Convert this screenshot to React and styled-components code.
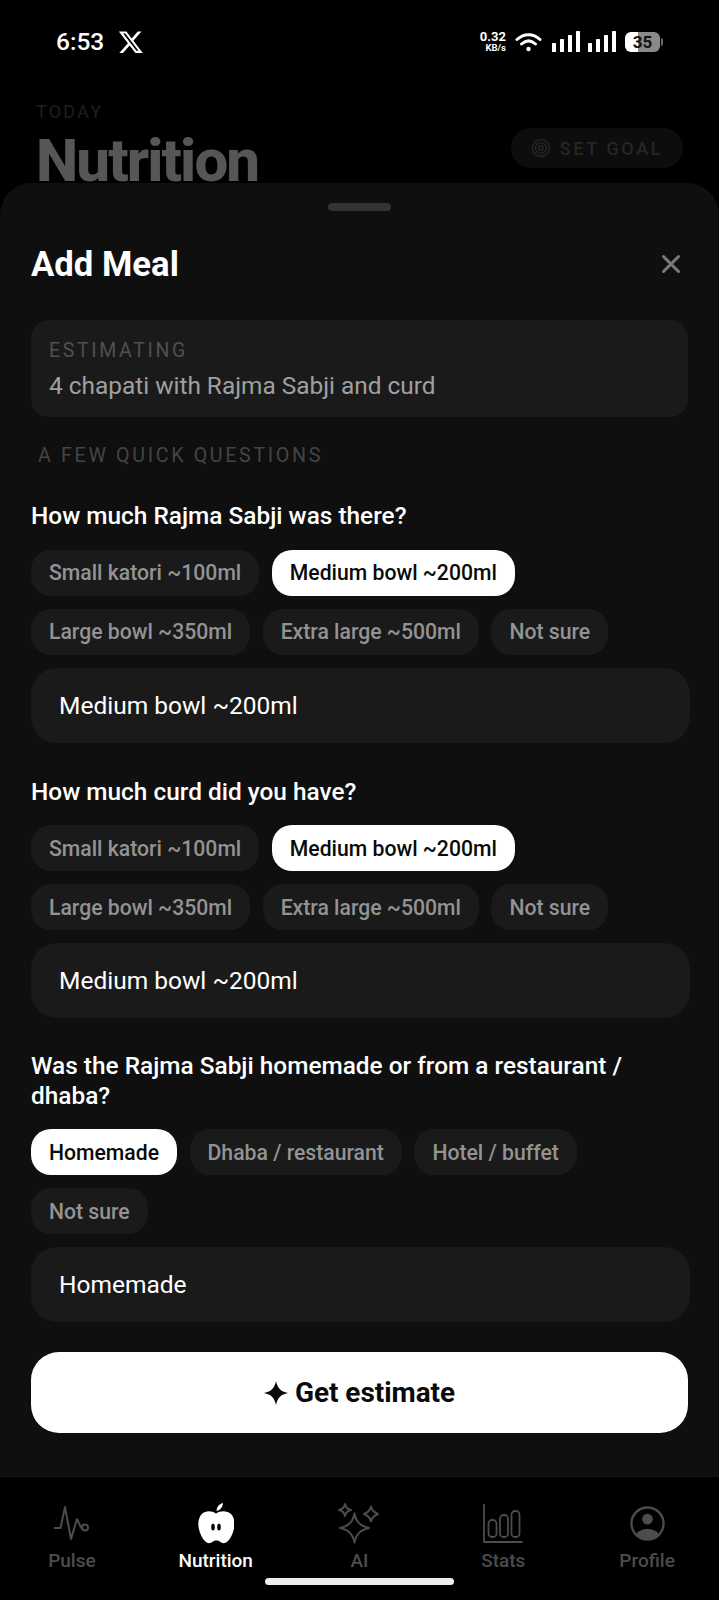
import React from "react";
import styled, { createGlobalStyle } from "styled-components";

const Global = createGlobalStyle`
  html, body { margin: 0; padding: 0; background: #000; }
  body { font-family: Roboto, "Liberation Sans", sans-serif; }
  * { box-sizing: border-box; }
`;

const Page = styled.div`
  width: 719px;
  height: 1600px;
  background: #000;
  position: relative;
  overflow: hidden;
  display: flex;
  flex-direction: column;
`;

const Backdrop = styled.div`
  height: 183px;
  flex: none;
  overflow: hidden;
`;

const StatusBar = styled.div`
  height: 83px;
  padding: 0 58px 0 56px;
  display: flex;
  align-items: center;
  justify-content: space-between;
  color: #fff;
`;

const StatusLeft = styled.div`
  display: flex;
  align-items: center;
  gap: 15px;
`;

const Clock = styled.span`
  font-size: 24.5px;
  font-weight: 500;
`;

const StatusRight = styled.div`
  display: flex;
  align-items: center;
`;

const Speed = styled.div`
  display: flex;
  flex-direction: column;
  align-items: flex-end;
  width: 30px;
  margin-right: 9px;
  font-weight: 700;
`;

const SpeedValue = styled.span`
  font-size: 13px;
  line-height: 13px;
`;

const SpeedUnit = styled.span`
  font-size: 9.5px;
  line-height: 10px;
`;

const SignalGap = styled.div`
  width: ${(p) => p.$w}px;
`;

const Battery = styled.div`
  position: relative;
  width: 35px;
  height: 20px;
  margin-left: 9px;
  margin-right: 1px;
  border-radius: 6px;
  background: linear-gradient(90deg, #fff 0 36%, #8a8a8a 36% 100%);
  color: #111;
  font-size: 17px;
  font-weight: 700;
  line-height: 20px;
  text-align: center;
  &::after {
    content: "";
    position: absolute;
    right: -3px;
    top: 6px;
    width: 2px;
    height: 8px;
    border-radius: 0 2px 2px 0;
    background: #666;
  }
`;

const Header = styled.div`
  padding: 19px 36px 0 36px;
  display: flex;
  justify-content: space-between;
  align-items: flex-start;
`;

const TodayLabel = styled.div`
  font-size: 18px;
  line-height: 20px;
  letter-spacing: 2.2px;
  color: #1f1f1f;
`;

const PageTitle = styled.div`
  margin-top: 4px;
  font-size: 60px;
  line-height: 70px;
  font-weight: 800;
  letter-spacing: -1.9px;
  color: #565656;
`;

const GoalButton = styled.div`
  margin-top: 26px;
  height: 40px;
  width: 172px;
  padding: 0 20px;
  border-radius: 20px;
  background: #0d0d0d;
  display: flex;
  align-items: center;
  gap: 9px;
  font-size: 18px;
  font-weight: 500;
  letter-spacing: 2.6px;
  color: #262626;
  white-space: nowrap;
`;

const Sheet = styled.div`
  height: 1293px;
  flex: none;
  background: #0f0f0f;
  border-radius: 32px 32px 0 0;
  padding: 20px 31px 0;
  display: flex;
  flex-direction: column;
`;

const Handle = styled.div`
  width: 63px;
  height: 8px;
  border-radius: 4px;
  background: #333;
  align-self: center;
`;

const TitleRow = styled.div`
  margin-top: 28px;
  height: 50px;
  display: flex;
  justify-content: space-between;
  align-items: center;
`;

const SheetTitle = styled.h2`
  margin: 0;
  font-size: 34.7px;
  font-weight: 700;
  color: #fff;
`;

const CloseButton = styled.button`
  all: unset;
  display: flex;
  margin-right: 7px;
`;

const EstimateCard = styled.div`
  margin-top: 31px;
  height: 97px;
  border-radius: 18px;
  background: #1a1a1a;
  padding: 19px 18px;
`;

const EstimateLabel = styled.div`
  font-size: 19.5px;
  line-height: 24px;
  letter-spacing: 2.65px;
  color: #505050;
`;

const EstimateText = styled.div`
  margin-top: 8px;
  font-size: 24.4px;
  line-height: 30px;
  color: #a0a0a0;
`;

const SectionLabel = styled.div`
  margin-top: 26px;
  padding-left: 7px;
  font-size: 19.7px;
  line-height: 26px;
  letter-spacing: 2.65px;
  color: #444;
`;

const Question = styled.section`
  margin-top: ${(p) => p.$gap}px;
  display: flex;
  flex-direction: column;
`;

const QuestionLabel = styled.div`
  font-size: 24.4px;
  line-height: 29.5px;
  font-weight: 500;
  color: #fff;
`;

const Chips = styled.div`
  margin-top: 19px;
  display: flex;
  flex-wrap: wrap;
  gap: 13px 12.5px;
`;

const Chip = styled.div`
  height: 46px;
  padding: 0 18px;
  border-radius: 20px;
  display: flex;
  align-items: center;
  font-size: 21.2px;
  font-weight: 500;
  background: ${(p) => (p.$on ? "#fff" : "#1a1a1a")};
  color: ${(p) => (p.$on ? "#0a0a0a" : "#939393")};
`;

const Answer = styled.div`
  margin-top: 13px;
  width: 659px;
  height: 75px;
  border-radius: 26px;
  background: #1a1a1a;
  padding: 0 28px;
  display: flex;
  align-items: center;
  font-size: 24.5px;
  color: #fff;
`;

const EstimateButton = styled.button`
  all: unset;
  margin-top: 30px;
  height: 81px;
  border-radius: 28px;
  background: #fff;
  display: flex;
  align-items: center;
  justify-content: center;
  gap: 7px;
  font-size: 27.9px;
  font-weight: 700;
  color: #0a0a0a;
`;

const TabBar = styled.nav`
  flex: 1;
  background: #000;
  border-top: 1px solid #161616;
  display: grid;
  grid-template-columns: repeat(5, 1fr);
  padding-top: 23px;
`;

const Tab = styled.div`
  display: flex;
  flex-direction: column;
  align-items: center;
  font-size: 19px;
  font-weight: 500;
  line-height: 22px;
  color: ${(p) => (p.$on ? "#fff" : "#4c4c4c")};
`;

const TabIcon = styled.div`
  height: 46px;
  display: flex;
  align-items: center;
  justify-content: center;
  margin-bottom: 4px;
`;

const HomeBar = styled.div`
  position: absolute;
  left: 265px;
  bottom: 15px;
  width: 189px;
  height: 7px;
  border-radius: 4px;
  background: #eee;
`;

const XLogo = () => (
  <svg width="25" height="24" viewBox="0 0 24 24" fill="#fff">
    <path d="M18.24 1.5h3.68l-8.04 9.19L23.34 23h-7.41l-5.8-7.58L3.49 23H-.19l8.6-9.83L-.66 1.5h7.6l5.24 6.93zM16.95 20.8h2.04L5.83 3.6H3.64z" />
  </svg>
);

const Wifi = () => (
  <svg width="27" height="20" viewBox="0 0 27 20" fill="none" stroke="#fff" strokeWidth="3" strokeLinecap="round">
    <path d="M2 7.5C9 1 18 1 25 7.5" />
    <path d="M6.5 12c4.5-4 9.5-4 14 0" />
    <circle cx="13.5" cy="17" r="2.2" fill="#fff" stroke="none" />
  </svg>
);

const Signal = () => (
  <svg width="28" height="21" viewBox="0 0 28 21" fill="#fff">
    <rect x="0" y="12" width="4" height="9" rx="0.5" />
    <rect x="8" y="8" width="4" height="13" rx="0.5" />
    <rect x="16" y="4" width="4" height="17" rx="0.5" />
    <rect x="24" y="0" width="4" height="21" rx="0.5" />
  </svg>
);

const Target = () => (
  <svg width="24" height="24" viewBox="0 0 22 22" fill="none" stroke="#262626" strokeWidth="1.6">
    <circle cx="11" cy="11" r="9.5" />
    <circle cx="11" cy="11" r="6" />
    <circle cx="11" cy="11" r="2.5" />
  </svg>
);

const Close = () => (
  <svg width="20" height="20" viewBox="0 0 20 20" stroke="#7a7a7a" strokeWidth="3" strokeLinecap="round">
    <path d="M2.5 2.5l15 15M17.5 2.5l-15 15" />
  </svg>
);

const Spark = () => (
  <svg width="24" height="24" viewBox="0 0 24 24" fill="#0a0a0a">
    <path d="M12 0c1.5 7 4.5 10.5 12 12-7.5 1.5-10.5 5-12 12-1.5-7-4.500-10.500-12-12 7.500-1.500 10.500-5 12-12z" />
  </svg>
);

const PulseIcon = () => (
  <svg width="36" height="34" viewBox="0 0 36 34" fill="none" stroke="#4c4c4c" strokeWidth="2" strokeLinejoin="round">
    <path d="M0 22h6.500L11 1l6 32 6-20 4 8.500h1" />
    <circle cx="31" cy="21.500" r="3" />
  </svg>
);

const AppleIcon = () => (
  <svg width="36" height="41" viewBox="0 0 36 41">
    <path fill="#fff" d="M18 10.500C13.500 7.500 7.500 7.500 3.800 11 .5 14.300-.3 20 .8 25.500c1 5 3.500 10.300 6.800 13.300 1.500 1.400 3.500 1.700 5.400 1 1.200-.5 2.100-1.600 3.300-2 1.400-.4 2.800-.4 4.200 0 1.200.4 2.100 1.500 3.300 2 1.900.7 3.900.4 5.400-1 3.300-3 5.800-8.300 6.800-13.300 1.100-5.500.3-11.200-3-14.500C29 7.500 22.500 7.500 18 10.500z" />
    <path fill="#fff" d="M18.600 8c.1-3.800 2.200-6.800 6.200-8 .2 3.900-2.200 7-6.200 8z" />
    <ellipse cx="15" cy="24" rx="1.800" ry="3.600" fill="#000" />
    <ellipse cx="21" cy="24" rx="1.800" ry="3.600" fill="#000" />
  </svg>
);

const SparklesIcon = () => (
  <svg width="42" height="41" viewBox="0 0 42 41" fill="none" stroke="#4c4c4c" strokeWidth="2" strokeLinejoin="round">
    <path d="M16.500 10.500c1.700 8 5 12.300 14.500 14.500-9.500 2.200-12.800 6.500-14.500 14.500C14.800 31.500 11.500 27.200 2 25c9.500-2.200 12.800-6.500 14.500-14.500z" />
    <path d="M7 1c.7 3.300 2.500 5.300 6 6-3.500.7-5.300 2.700-6 6-.7-3.300-2.500-5.300-6-6 3.500-.7 5.300-2.700 6-6z" />
    <path d="M33 3.500c.8 3.800 3 6 7 7.500-4 1.500-6.200 3.700-7 7.500-.8-3.800-3-6-7-7.500 4-1.500 6.200-3.700 7-7.500z" />
  </svg>
);

const StatsIcon = () => (
  <svg width="40" height="39" viewBox="0 0 40 39" fill="none" stroke="#4c4c4c" strokeWidth="1.8">
    <path d="M1 0v38h38.500" />
    <rect x="5.500" y="16" width="8" height="17" rx="3.500" />
    <rect x="17" y="11" width="8" height="22" rx="3.500" />
    <rect x="28.500" y="7" width="8" height="26" rx="3.500" />
  </svg>
);

const ProfileIcon = () => (
  <svg width="35" height="35" viewBox="0 0 36 36">
    <defs>
      <clipPath id="profile-clip">
        <circle cx="18" cy="18" r="16" />
      </clipPath>
    </defs>
    <circle cx="18" cy="18" r="16.500" fill="none" stroke="#4c4c4c" strokeWidth="2.400" />
    <circle cx="18" cy="13.500" r="5.500" fill="#4c4c4c" />
    <ellipse cx="18" cy="33" rx="13" ry="9.500" fill="#4c4c4c" clipPath="url(#profile-clip)" />
  </svg>
);

const portionOptions = ["Small katori ~100ml", "Medium bowl ~200ml", "Large bowl ~350ml", "Extra large ~500ml", "Not sure"];

const questions = [
  { label: "How much Rajma Sabji was there?", options: portionOptions, answer: "Medium bowl ~200ml", gap: 32 },
  { label: "How much curd did you have?", options: portionOptions, answer: "Medium bowl ~200ml", gap: 34 },
  {
    label: "Was the Rajma Sabji homemade or from a restaurant / dhaba?",
    options: ["Homemade", "Dhaba / restaurant", "Hotel / buffet", "Not sure"],
    answer: "Homemade",
    gap: 33,
  },
];

const tabs = [
  { label: "Pulse", icon: <PulseIcon /> },
  { label: "Nutrition", icon: <AppleIcon />, on: true },
  { label: "AI", icon: <SparklesIcon /> },
  { label: "Stats", icon: <StatsIcon /> },
  { label: "Profile", icon: <ProfileIcon /> },
];

export default function App() {
  return (
    <Page>
      <Global />
      <Backdrop>
        <StatusBar>
          <StatusLeft>
            <Clock>6:53</Clock>
            <XLogo />
          </StatusLeft>
          <StatusRight>
            <Speed>
              <SpeedValue>0.32</SpeedValue>
              <SpeedUnit>KB/s</SpeedUnit>
            </Speed>
            <Wifi />
            <SignalGap $w={10} />
            <Signal />
            <SignalGap $w={8} />
            <Signal />
            <Battery>35</Battery>
          </StatusRight>
        </StatusBar>
        <Header>
          <div>
            <TodayLabel>TODAY</TodayLabel>
            <PageTitle>Nutrition</PageTitle>
          </div>
          <GoalButton>
            <Target />
            SET GOAL
          </GoalButton>
        </Header>
      </Backdrop>
      <Sheet>
        <Handle />
        <TitleRow>
          <SheetTitle>Add Meal</SheetTitle>
          <CloseButton>
            <Close />
          </CloseButton>
        </TitleRow>
        <EstimateCard>
          <EstimateLabel>ESTIMATING</EstimateLabel>
          <EstimateText>4 chapati with Rajma Sabji and curd</EstimateText>
        </EstimateCard>
        <SectionLabel>A FEW QUICK QUESTIONS</SectionLabel>
        {questions.map((q) => (
          <Question key={q.label} $gap={q.gap}>
            <QuestionLabel>{q.label}</QuestionLabel>
            <Chips>
              {q.options.map((o) => (
                <Chip key={o} $on={o === q.answer}>
                  {o}
                </Chip>
              ))}
            </Chips>
            <Answer>{q.answer}</Answer>
          </Question>
        ))}
        <EstimateButton>
          <Spark />
          Get estimate
        </EstimateButton>
      </Sheet>
      <TabBar>
        {tabs.map((t) => (
          <Tab key={t.label} $on={t.on}>
            <TabIcon>{t.icon}</TabIcon>
            {t.label}
          </Tab>
        ))}
      </TabBar>
      <HomeBar />
    </Page>
  );
}
